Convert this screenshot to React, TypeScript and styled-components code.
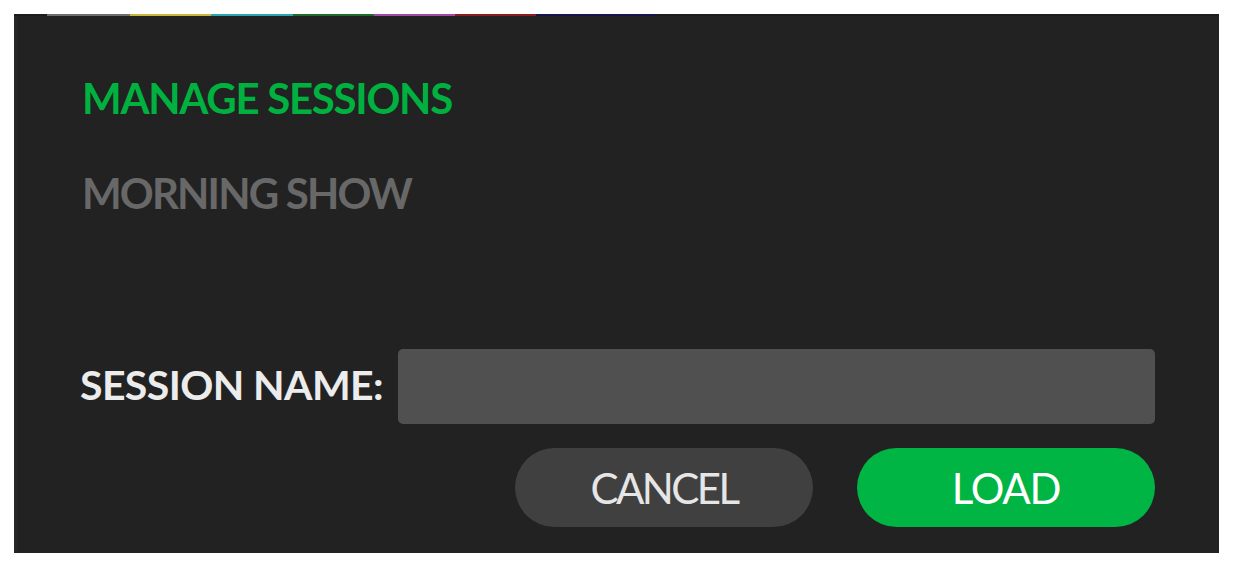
import React from "react";
import styled, { createGlobalStyle } from "styled-components";

/* Global */
const GlobalStyle = createGlobalStyle`
    html, body {
        margin: 0;
        padding: 0;
        background: #ffffff;
    }
    * {
        box-sizing: border-box;
    }
`;

/* Page Layout */
const Page = styled.div`
    width: 1234px;
    height: 565px;
    padding: 15px 15px 12px 14px;
    display: flex;
    flex-direction: column;
    font-family: Lato, "Open Sans", "Liberation Sans", sans-serif;
`;

/* Strip of colour swatches cut off at the top edge */
const TopStrip = styled.div`
    display: flex;
    height: 2px;
    margin-top: -1px;
    background: #1c1c1c;
`;

const StripSegment = styled.span<{ $color: string }>`
    height: 100%;
    flex: none;
    background: ${({ $color }) => $color};
`;

const Panel = styled.section`
    flex: 1;
    display: flex;
    flex-direction: column;
    background: #222222;
    box-shadow: inset 5px 0 4px -3px #2c2c2c;
    padding: 61px 64px 26px 68px;
`;

/* Headings */
const Title = styled.h1`
    margin: 0;
    font-size: 42px;
    line-height: 42px;
    font-weight: 700;
    color: #00b140;
    letter-spacing: -1.3px;
`;

const SessionItem = styled.div`
    margin-top: 53px;
    font-size: 42px;
    line-height: 42px;
    font-weight: 700;
    color: #686868;
    letter-spacing: -1.85px;
`;

/* Form */
const Form = styled.form`
    margin-top: auto;
    display: flex;
    flex-direction: column;
    gap: 24px;
`;

const FieldRow = styled.label`
    display: flex;
    align-items: center;
    gap: 15px;
`;

const FieldLabel = styled.span`
    margin-left: -2px;
    margin-top: -4px;
    font-size: 41px;
    line-height: 42px;
    font-weight: 700;
    color: #ececec;
    letter-spacing: -0.6px;
    white-space: nowrap;
`;

const NameInput = styled.input`
    flex: 1;
    height: 75px;
    border: none;
    outline: none;
    border-radius: 5px;
    background: #505050;
    color: #ececec;
    font-family: inherit;
    font-size: 36px;
    padding: 0 16px;
`;

const ButtonRow = styled.div`
    display: flex;
    justify-content: flex-end;
    gap: 44px;
`;

const PillButton = styled.button<{ $primary?: boolean }>`
    width: 298px;
    height: 79px;
    border: none;
    border-radius: 40px;
    background: ${({ $primary }) => ($primary ? "#00b543" : "#404040")};
    color: ${({ $primary }) => ($primary ? "#ffffff" : "#e6e6e6")};
    font-family: inherit;
    font-size: 42px;
    font-weight: 400;
    letter-spacing: ${({ $primary }) => ($primary ? "-1.2px" : "-2.6px")};
    cursor: pointer;
`;

const colourSegments = [
    { color: "#1c1c1c", width: 33 },
    { color: "#6e6e6e", width: 83 },
    { color: "#c9b53a", width: 81 },
    { color: "#2aa6b0", width: 82 },
    { color: "#1f6b2c", width: 81 },
    { color: "#a24aa8", width: 81 },
    { color: "#8a1e1e", width: 81 },
    { color: "#15154a", width: 120 },
];

export default function App() {
    return (
        <>
            <GlobalStyle />
            <Page>
                <TopStrip>
                    {colourSegments.map((s, i) => (
                        <StripSegment key={i} $color={s.color} style={{ width: s.width }} />
                    ))}
                </TopStrip>
                <Panel>
                    <Title>MANAGE SESSIONS</Title>
                    <SessionItem>MORNING SHOW</SessionItem>
                    <Form onSubmit={(e) => e.preventDefault()}>
                        <FieldRow>
                            <FieldLabel>SESSION NAME:</FieldLabel>
                            <NameInput type="text" />
                        </FieldRow>
                        <ButtonRow>
                            <PillButton type="button">CANCEL</PillButton>
                            <PillButton type="submit" $primary>
                                LOAD
                            </PillButton>
                        </ButtonRow>
                    </Form>
                </Panel>
            </Page>
        </>
    );
}
